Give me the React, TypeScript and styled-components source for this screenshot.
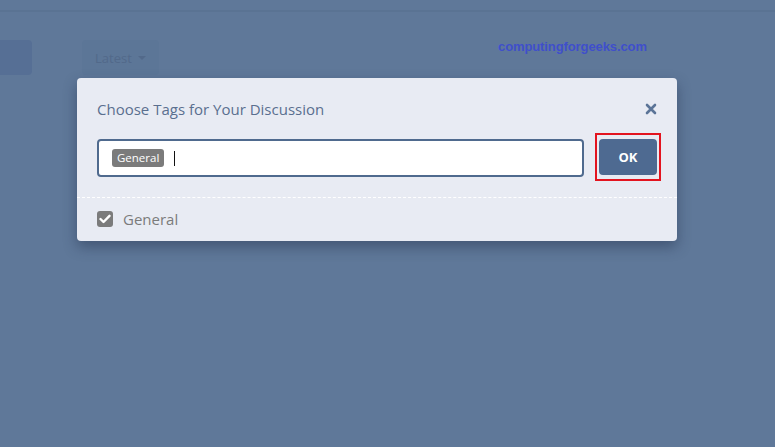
import React from "react";
import styled, { createGlobalStyle } from "styled-components";

const GlobalStyle = createGlobalStyle`
  html, body {
    margin: 0;
    padding: 0;
    width: 100%;
    height: 100%;
    background: #5f7899;
    font-family: "Open Sans", "Noto Sans", sans-serif;
    overflow: hidden;
  }
`;

const Page = styled.div`
  position: relative;
  width: 775px;
  height: 447px;
  background: #5f7899;
`;

const Header = styled.div`
  height: 10px;
  background: #5f7899;
  border-bottom: 2px solid #5a7393;
`;

const Toolbar = styled.div`
  display: flex;
  align-items: center;
  gap: 50px;
  padding-top: 28px;
`;

const SideButton = styled.div`
  width: 32px;
  height: 35px;
  background: #566f95;
  border-radius: 0 4px 4px 0;
`;

const SortButton = styled.div`
  display: flex;
  align-items: center;
  gap: 6px;
  height: 35px;
  padding: 0 13px;
  background: #5c7697;
  border-radius: 4px;
  color: #52698a;
  font-size: 13px;
`;

const Caret = styled.span`
  width: 0;
  height: 0;
  border-left: 4px solid transparent;
  border-right: 4px solid transparent;
  border-top: 4px solid #52698a;
`;

const Watermark = styled.div`
  position: absolute;
  left: 498px;
  top: 39px;
  color: #3f4fcb;
  font-family: "Liberation Sans", Arial, sans-serif;
  font-weight: bold;
  font-size: 13px;
  letter-spacing: -0.1px;
`;

const Modal = styled.div`
  position: absolute;
  left: 77px;
  top: 78px;
  width: 600px;
  background: #e8ebf3;
  border-radius: 4px;
  box-shadow: 0 6px 14px rgba(30, 45, 70, 0.45);
`;

const ModalHeader = styled.div`
  display: flex;
  align-items: center;
  justify-content: space-between;
  padding: 19px 20px 0 20px;
  height: 24px;
`;

const Title = styled.h3`
  margin: 0;
  font-size: 15px;
  font-weight: normal;
  color: #5a6f8f;
`;

const CloseButton = styled.button`
  border: none;
  background: none;
  padding: 0;
  display: flex;
  cursor: pointer;
`;

const Body = styled.div`
  display: flex;
  gap: 15px;
  align-items: flex-start;
  padding: 18px 20px 20px 20px;
  border-bottom: 1px dashed #ffffff;
`;

const TagInput = styled.div`
  flex: 1;
  display: flex;
  align-items: center;
  gap: 10px;
  height: 34px;
  padding: 0 13px;
  background: #ffffff;
  border: 2px solid #4f6a8e;
  border-radius: 4px;
`;

const Tag = styled.span`
  background: #7b7b7b;
  color: #ffffff;
  font-size: 11.5px;
  line-height: 18px;
  padding: 0 5px;
  border-radius: 3px;
`;

const TextCaret = styled.span`
  width: 1px;
  height: 15px;
  background: #111;
`;

const Highlight = styled.div`
  position: relative;
  &::after {
    content: "";
    position: absolute;
    top: -6px;
    bottom: -6px;
    left: -4px;
    right: -4px;
    border: 2.5px solid #e3141f;
    pointer-events: none;
  }
`;

const OkButton = styled.button`
  width: 58px;
  height: 36px;
  border: none;
  border-radius: 4px;
  background: #4e6a91;
  color: #ffffff;
  font-family: "Open Sans", sans-serif;
  font-weight: bold;
  font-size: 13px;
  display: block;
`;

const Footer = styled.div`
  display: flex;
  align-items: center;
  gap: 10px;
  padding: 12px 20px 13px 20px;
`;

const CheckBox = styled.span`
  width: 16px;
  height: 16px;
  background: #7b7b7b;
  border-radius: 3px;
  display: flex;
  align-items: center;
  justify-content: center;
`;

const Label = styled.span`
  font-size: 15px;
  line-height: 18px;
  color: #7b7b7b;
`;

export default function App() {
  return (
    <>
      <GlobalStyle />
      <Page>
        <Header />
        <Toolbar>
          <SideButton />
          <SortButton>
            Latest <Caret />
          </SortButton>
        </Toolbar>
        <Watermark>computingforgeeks.com</Watermark>
        <Modal>
          <ModalHeader>
            <Title>Choose Tags for Your Discussion</Title>
            <CloseButton aria-label="Close">
              <svg width="12" height="12" viewBox="0 0 12 12">
                <path d="M2 2 L10 10 M10 2 L2 10" stroke="#5b7497" strokeWidth="2.6" strokeLinecap="round" />
              </svg>
            </CloseButton>
          </ModalHeader>
          <Body>
            <TagInput>
              <Tag>General</Tag>
              <TextCaret />
            </TagInput>
            <Highlight>
              <OkButton>OK</OkButton>
            </Highlight>
          </Body>
          <Footer>
            <CheckBox>
              <svg width="12" height="10" viewBox="0 0 12 10">
                <path d="M1.5 5 L4.5 8 L10.5 1.8" stroke="#fff" strokeWidth="2.4" fill="none" strokeLinecap="round" strokeLinejoin="round" />
              </svg>
            </CheckBox>
            <Label>General</Label>
          </Footer>
        </Modal>
      </Page>
    </>
  );
}
